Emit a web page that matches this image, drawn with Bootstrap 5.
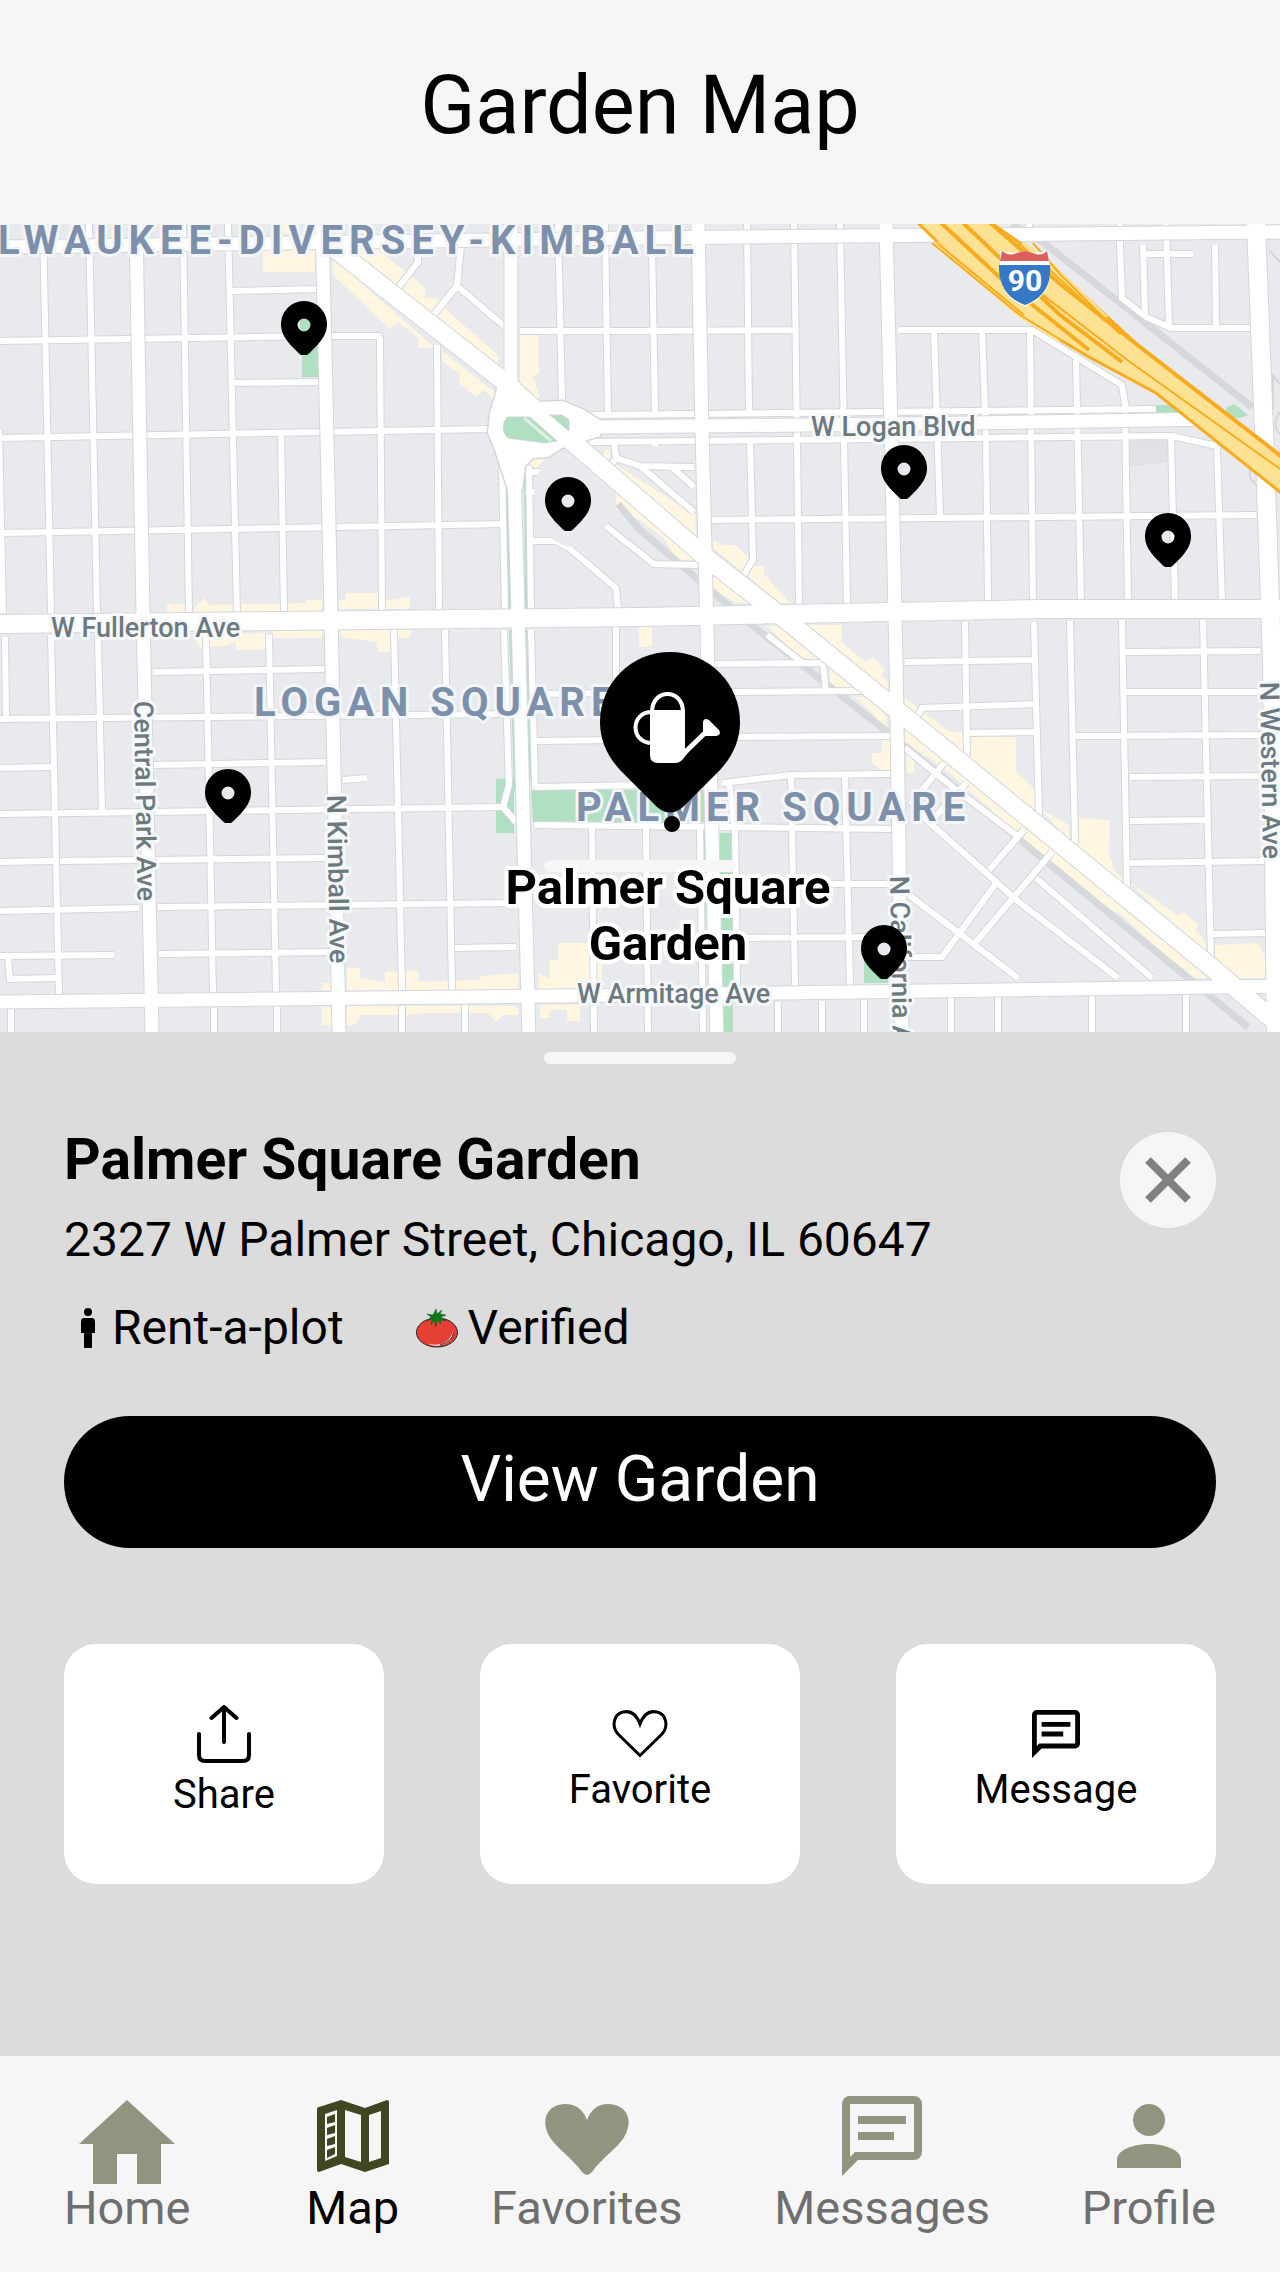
<!DOCTYPE html>
<html lang="en">
<head>
<meta charset="utf-8">
<meta name="viewport" content="width=device-width, initial-scale=1">
<title>Garden Map</title>
<link href="https://cdn.jsdelivr.net/npm/bootstrap@5.3.0/dist/css/bootstrap.min.css" rel="stylesheet">
<style>
  body { font-family: Roboto, "Liberation Sans", sans-serif; color: #000; background: #dcdcdc; }
  .app-head { background: #f6f6f6; padding: 58px 0 70px; }
  .app-title { font-size: 81px; line-height: 96px; font-weight: 400; }
  .map-art text { font-family: Roboto, "Liberation Sans", sans-serif; }
  .area-name { font-size: 40px; font-weight: 700; letter-spacing: 6px; fill: #7d90ab; stroke: #f3f5f8; stroke-width: 6px; paint-order: stroke; stroke-linejoin: round; }
  .road-name { font-size: 27px; font-weight: 500; fill: #6c7a80; stroke: #f6f8f9; stroke-width: 6px; paint-order: stroke; stroke-linejoin: round; }
  .spot-name { font-size: 49px; font-weight: 700; fill: #000; stroke: #fff; stroke-width: 8px; paint-order: stroke; stroke-linejoin: round; text-anchor: middle; }
  .pin { position: absolute; transform: translateX(-50%); line-height: 0; }
  .pin-a { left: 23.75%; top: 9.53%; }
  .pin-b { left: 44.38%; top: 31.31%; }
  .pin-c { left: 70.63%; top: 27.35%; }
  .pin-d { left: 91.25%; top: 35.77%; }
  .pin-e { left: 17.81%; top: 67.45%; }
  .pin-f { left: 69.06%; top: 86.76%; }
  .pin-main { left: 52.34%; top: 52.97%; }
  .sheet { padding: 20px 64px 172px; }
  .grip { width: 192px; height: 12px; background: #f6f6f6; margin-bottom: 64px; }
  .spot-title { font-size: 57px; line-height: 64px; font-weight: 700; }
  .spot-text { font-size: 48px; line-height: 56px; }
  .close-btn { width: 96px; height: 96px; background: #f6f6f6; line-height: 0; margin-top: 4px; }
  .address { margin-top: 20px; }
  .facts { margin-top: 32px; padding-left: 16px; gap: 72px; }
  .view-btn { margin-top: 60px; height: 132px; font-size: 64px; line-height: 72px; background: #000; color: #fff; }
  .tiles { margin-top: 96px; gap: 96px; }
  .tile { flex: 1 1 0; height: 240px; border-radius: 32px; background: #fff; color: #000; font-size: 40px; line-height: 48px; }
  .tile svg { margin-bottom: 8px; }
  .tab-bar { background: #f6f6f6; padding: 40px 64px 36px; }
  .tab-bar a { font-size: 47px; line-height: 56px; color: #6f6f6f; }
  .tab-bar a.active { color: #000; }
  .tab-bar svg { fill: #90957f; overflow: visible; }
</style>
</head>
<body>
<header class="app-head text-center">
  <h1 class="app-title m-0">Garden Map</h1>
</header>

<main>
<section class="position-relative overflow-hidden" aria-label="Map of gardens">
<svg class="map-art d-block w-100 h-auto" viewBox="0 224 1280 808" role="img" aria-label="Street map of Logan Square">
  <defs>
    <g id="lanes">
      <path d="M-1 430L3 613M43 224L51 613M89 224L97 613M183 224L189 613M228 224L237 613M281 433L284 613M380 336L382 611M437 345L439 609M502 466L505 609M529 466L531 609M558 224L562 400M605 224L608 418"/>
      <path d="M0 341L320 336H380M0 438L490 429M0 533L505 524M231 291L318 289M233 383L318 382"/>
      <path d="M418 224V262L398 288M462 236L457 286L432 317M457 286L504 326"/>
      <path d="M520 331L640 331L795 330M652 244L655 412M747 224L749 412M794 224L797 438L799 604M840 224L844 438L847 604M750 438L753 560L743 576M655 440V446"/>
      <path d="M934 330L940 517M982 330L986 438L988 602M1030 330L1033 602M1076 360L1081 602M1125 410L1128 602M1171 436L1175 602M1217 447L1222 602"/>
      <path d="M898 330H1032L1122 385L1126 410M590 415L1156 409M590 442L1172 436L1217 446M711 520L1256 515"/>
      <path d="M1120 224V245L1122 298L1146 317L1171 328H1250M1143 245L1145 315M1166 224L1169 326M1215 245L1216 328M1143 254H1193M1029 224V232"/>
      <path d="M526 472H545M526 492H545M530 541H556L569 548L616 588L618 609M588 512L640 553L654 564L698 565M614 442L616 458L640 466L694 467M616 458L612 464M640 466L694 512M672 467L694 487"/>
      <path d="M5 637L6 719M51 635L59 995M98 637L102 812M206 637L213 993M269 635L276 993M394 630L402 990M445 630L452 990M504 630L509 785L503 807L516 822M531 630L535 787M592 825L594 1032M616 627V693"/>
      <path d="M153 672L324 669M0 719L510 714M0 768L53 767M154 765L326 762M343 780L367 778M0 814L502 807M0 862L53 861M60 861L326 858M0 911L139 908M158 907L516 903M0 956L114 955M159 954L335 952M455 948L516 947M8 957L10 979L57 978M531 694L700 692M537 741L700 739M535 787L700 784M535 825L891 829"/>
      <path d="M646 826L648 1032M700 826L703 1032M729 783L735 829L737 985M791 776L795 985M845 776L850 985M715 664L823 663L826 692M715 692L862 691M715 737L890 736M722 783L791 775L890 774M735 884H890M735 938L890 937"/>
      <path d="M905 662L1036 660M917 717L922 708L1036 704M968 733L1038 732M965 622L967 757M1034 622L1039 817M1070 621L1075 843M1122 620L1127 887M1203 620L1211 962M1124 652L1260 651M1124 692H1262M1075 736L1262 735M1130 777L1262 776M1130 821L1207 820M1130 863L1266 861M1213 934L1267 933"/>
      <path d="M767 635L803 663M905 748L955 789L1020 838M944 763L912 803L930 823L1020 903L1118 978M966 783L934 818M1024 830L989 870M1052 852L975 943M997 882L942 957H907M909 895L1018 978M1036 878L1152 978"/>
      <path d="M11 1008V1032M214 1008V1032M277 1006V1032M402 1006V1032M465 1005V1032M778 1002V1032M822 1001V1032M864 1000V1032M951 998V1032M998 997V1032M1092 996V1032M1186 995V1032"/>
    </g>
    <g id="avenues">
      <path d="M0 247L640 238L1280 232M0 1002L640 995L1290 986"/>
      <path d="M136 224L143 613L152 1032M322 224L331 613L339 1032M511 224V400M514 470L518 613L529 1040M698 224L702 430L707 630L717 1040M886 224L891 430L896 660L902 1040"/>
      <path d="M600 427L900 424L1215 419"/>
    </g>
    <g id="main-roads">
      <path d="M0 624L640 617L1040 609L1290 609M1256 224L1264 430L1272 660L1276 1040M316 234L502 380L547 420L709 560L791 624L893 707L1211 967L1290 1034"/>
    </g>
    <path id="circle-road" d="M496 393L490 413L488 433L495 450L508 490H522L525 466L533 458L548 457L562 448L600 436V420L584 410L563 401L533 402L520 390L514 372L500 372Z"/>
    <path id="pin-shape" fill-rule="evenodd" d="M23 0a23 23 0 0 1 23 23.500c0 9-5 15-10 21l-8 8c-3 3-7 3-10 0l-8-8c-5-6-10-12-10-21a23 23 0 0 1 23-23.500zM23 17.500a6.500 6.500 0 1 0 0 13a6.500 6.500 0 1 0 0-13z"/>
  </defs>
  <rect y="224" width="1280" height="808" fill="#e8eaed"/>
  <path fill="#e1e2e5" d="M1129 440H1169V462L1129 467Z"/>
  <!-- commercial blocks -->
  <path fill="#fef6e0" d="M272 224H294V234H272ZM263 250H315V272H263ZM333 258L435 348H418V337L398 322L390 329L333 275ZM350 248H376L426 288L424 298H437L453 316L498 355V370ZM441 350L496 393V402L484 390L476 397L459 383L461 375L443 362ZM520 335H539V373L533 377L540 397L533 400L520 390Z
    M167 604H186V613H167ZM194 608L204 598L210 605L306 603V600H322V613H194ZM346 593H378V609H339V600H346ZM386 600L410 597V609H386ZM193 636L265 633V650H237L235 642L225 646L200 648ZM273 631H322V638H273ZM341 630H410V638H390V652H378L376 642L341 637ZM639 627H652V647H639Z
    M347 968H360V978L385 982V972L418 970V982L480 980V976L518 973V990H347ZM539 972L549 980V960H558V943H602V990H539ZM322 983H333V990H322ZM322 1007H333V1025H322ZM347 1006H518V1015H504L496 1022L488 1013H424L408 1015H361L355 1025H347ZM540 1005H580V1021H567V1010H550V1018H540Z
    M531 459H545L537 468H531ZM605 450H610V460H601ZM612 462L640 480L695 515L697 545L640 490ZM616 490L697 553V560H677L665 540L640 520L616 510ZM713 540L722 545H736L748 557L750 566H764V574L790 603H780L713 548ZM713 570L756 603H738L713 592Z
    M807 625H842V643L866 662L873 657L885 670L881 675L888 682V694ZM767 626H783L860 689H830V667H818L795 653ZM855 697H868L887 717V730L872 713ZM905 698L920 710L950 732H962L964 760L905 712ZM971 737H1016V772L1036 790V817L971 765ZM1042 810L1069 825V842ZM1079 818L1110 820L1109 853L1115 872L1124 880V890L1079 855ZM1130 882L1177 915L1183 912L1199 925L1195 930L1206 942V960ZM1215 945L1258 943L1266 957V978H1234L1215 963ZM905 728L1208 978H1195L1163 953L1118 912H1110L1048 865L1020 835L942 767L905 742ZM882 740H890V770H882L872 763V753H882ZM907 753H914V773H907Z"/>
  <!-- parks -->
  <path fill="#b1dfc1" d="M300 316H318V377H302V340H300ZM496 779L514 778V833H496ZM531 790H705V822H533ZM720 833H733V1032H720ZM864 957H888V983H864ZM1156 405H1179V413H1156ZM1226 408L1234 404L1248 415L1240 418H1226Z"/>
  <path fill="#bcdccb" d="M505 476H511L516 613H507ZM524 480H527L530 613H525ZM509 630H513L520 790H514ZM526 630H530L533 780H529ZM703 827H706V1032H703Z"/>
  <!-- railways -->
  <path fill="none" stroke="#d5d9db" stroke-width="7" d="M1012 224L1044 243L1252 407M618 504L640 530L754 627L885 730L1020 840L1248 1027"/>
  <use href="#lanes" fill="none" stroke="#d3d7dc" stroke-width="8"/>
  <use href="#lanes" fill="none" stroke="#fff" stroke-width="6"/>
  <ellipse cx="574" cy="496" rx="40" ry="51" fill="#e8eaed"/>
  <use href="#avenues" fill="none" stroke="#d3d7dc" stroke-width="15"/>
  <use href="#main-roads" fill="none" stroke="#d3d7dc" stroke-width="20"/>
  <use href="#circle-road" fill="none" stroke="#d3d7dc" stroke-width="3"/>
  <use href="#avenues" fill="none" stroke="#fff" stroke-width="13"/>
  <use href="#main-roads" fill="none" stroke="#fff" stroke-width="18"/>
  <use href="#circle-road" fill="#fff"/>
  <path fill="#b1dfc1" stroke="#cfd6d6" d="M507 417H530L557 441L545 443L508 438C502 432 502 424 507 417ZM550 415H562L569 420V431Z"/>
  <path stroke="#e3ece8" stroke-width="3" d="M524 418L551 441"/>
  <path fill="none" stroke="#d3d7dc" stroke-width="2" d="M1280 384L1273 376V410M1280 412C1274 420 1274 428 1280 434M1250 468V478L1257 486M1269 250L1280 262"/>
  <!-- expressway -->
  <path fill="#fde293" stroke="#f9ab1f" stroke-width="3" d="M915 220L955 259L1030 322L1089 357L1156 393L1290 500V463L1140 347L1050 264L987 220Z"/>
  <path fill="none" stroke="#fde293" stroke-width="5" d="M936 243L1020 315L1060 340M1022 243L1052 266L1106 318"/>
  <path fill="none" stroke="#f9ab1f" stroke-width="2" d="M932 243L1020 315L1089 357M937 243L1024 315M1018 243L1052 272L1106 322M1033 243L1060 274L1120 334M1000 262L1130 362L1290 476"/>
  <path fill="none" stroke="#f9ab1f" stroke-width="4" d="M938 220L1010 287L1089 350M960 220L1060 315L1122 362M987 220L1060 284L1140 347L1290 463"/>
  <!-- route shield -->
  <path fill="#fff" d="M1000 251Q1014 254 1025 251Q1036 254 1048 251L1050 268C1052 290 1038 302 1025 306C1012 302 998 290 1000 268Z"/>
  <path fill="#d9605c" d="M1002 251Q1008 256 1014 254Q1020 252 1025 251Q1030 252 1036 254Q1042 256 1047 251L1049 261H1000Z"/>
  <path fill="#3578c6" d="M999 265H1050C1052 287 1041 299 1025 305C1009 299 998 287 999 265Z"/>
  <text x="1025" y="291" font-size="30" font-weight="700" fill="#fff" text-anchor="middle">90</text>
  <!-- labels -->
  <text class="area-name" x="-2" y="254">LWAUKEE-DIVERSEY-KIMBALL</text>
  <text class="area-name" x="254" y="716">LOGAN SQUARE</text>
  <text class="area-name" x="576" y="821">PALMER SQUARE</text>
  <text class="road-name" x="51" y="637">W Fullerton Ave</text>
  <text class="road-name" x="811" y="436">W Logan Blvd</text>
  <text class="road-name" x="577" y="1003">W Armitage Ave</text>
  <text class="road-name" transform="translate(134 701) rotate(89)">Central Park Ave</text>
  <text class="road-name" transform="translate(327 795) rotate(89)">N Kimball Ave</text>
  <text class="road-name" transform="translate(890 876) rotate(89)">N California Ave</text>
  <text class="road-name" transform="translate(1260 682) rotate(89)">N Western Ave</text>
  <rect x="544" y="860" width="192" height="12" rx="6" fill="#f6f6f6"/>
  <text class="spot-name" x="668" y="904">Palmer Square<tspan x="668" y="960">Garden</tspan></text>
</svg>
<button type="button" class="btn p-0 border-0 pin pin-a" aria-label="Garden on Kimball Avenue"><svg width="46" height="54"><use href="#pin-shape"/></svg></button>
<button type="button" class="btn p-0 border-0 pin pin-b" aria-label="Garden on Kedzie Boulevard"><svg width="46" height="54"><use href="#pin-shape"/></svg></button>
<button type="button" class="btn p-0 border-0 pin pin-c" aria-label="Garden on Logan Boulevard"><svg width="46" height="54"><use href="#pin-shape"/></svg></button>
<button type="button" class="btn p-0 border-0 pin pin-d" aria-label="Garden near Western Avenue"><svg width="46" height="54"><use href="#pin-shape"/></svg></button>
<button type="button" class="btn p-0 border-0 pin pin-e" aria-label="Garden near Central Park Avenue"><svg width="46" height="54"><use href="#pin-shape"/></svg></button>
<button type="button" class="btn p-0 border-0 pin pin-f" aria-label="Garden on Armitage Avenue"><svg width="46" height="54"><use href="#pin-shape"/></svg></button>
<button type="button" class="btn p-0 border-0 pin pin-main" aria-label="Palmer Square Garden">
  <svg width="140" height="180" viewBox="0 0 140 180">
    <path d="M70 0a70 70 0 0 1 70 70c0 19-8 35-20 48l-37 37q-13 11-26 0l-37-37c-12-13-20-29-20-48a70 70 0 0 1 70-70z"/>
    <circle cx="72" cy="172" r="8"/>
    <g fill="none" stroke="#fff" stroke-width="4"><path d="M52 60C52 36 83 36 83 60M52 60C30 60 30 91 52 91"/><path stroke-width="5" d="M78 107L107 79"/></g>
    <path fill="#fff" d="M50 58H85V98L90 98L83 107Q80 111 75 111H58Q50 111 50 103ZM103 70Q104 65 109 68L119 78Q122 83 116 84H103Z"/>
  </svg>
</button>
</section>

<section class="sheet">
  <div class="grip rounded-pill mx-auto"></div>
  <div class="d-flex justify-content-between align-items-start">
    <div>
      <h2 class="spot-title m-0">Palmer Square Garden</h2>
      <p class="spot-text address mb-0">2327 W Palmer Street, Chicago, IL 60647</p>
    </div>
    <button type="button" class="btn close-btn rounded-circle border-0 p-0 flex-shrink-0" aria-label="Close">
      <svg width="46" height="46" viewBox="0 0 46 46"><path d="M3 3L43 43M43 3L3 43" stroke="#808080" stroke-width="8"/></svg>
    </button>
  </div>
  <ul class="facts spot-text list-unstyled d-flex flex-wrap mb-0">
    <li class="d-flex align-items-center gap-3">
      <svg width="16" height="40" viewBox="0 0 16 40"><circle cx="8" cy="4" r="4"/><path d="M4 10H12Q15 10 15 14V25H12V40H4V25H1V14Q1 10 4 10Z"/></svg>
      Rent-a-plot
    </li>
    <li class="d-flex align-items-center gap-2">
      <svg width="44" height="40" viewBox="0 0 44 40"><ellipse cx="21" cy="24.500" rx="20.500" ry="14.500" fill="#e64035" stroke="#222"/><path d="M12 36Q31 40 37 24Q36 34 26 37Q18 39 12 36Z" fill="#fff"/><path d="M24 37Q35 34 38 25" fill="none" stroke="#333"/><path fill="#107a10" stroke="#153" stroke-width=".5" d="M20 1L21 6L26 2L24 6L30 7L25 9L30 13L24 12L25 16L21 12L20 19L18 12L15 17L16 11L11 13L15 9L11 6L17 7Z"/></svg>
      Verified
    </li>
  </ul>
  <button type="button" class="btn view-btn rounded-pill border-0 w-100 px-0 pt-0 pb-1">View Garden</button>
  <div class="tiles d-flex">
    <button type="button" class="btn tile border-0 px-0 pt-0 pb-1 d-flex flex-column align-items-center justify-content-center">
      <svg width="54" height="58" viewBox="0 0 54 58" fill="none" stroke="#000" stroke-width="4" stroke-linecap="round" stroke-linejoin="round"><path d="M27 37V2M14.500 13L27 2L39.500 13M2 29V50Q2 56 8 56H46Q52 56 52 50V29"/></svg>
      Share
    </button>
    <button type="button" class="btn tile border-0 px-0 pt-0 pb-1 d-flex flex-column align-items-center justify-content-center">
      <svg width="56" height="48" viewBox="0 0 56 48" fill="none" stroke="#000" stroke-width="3"><path d="M28 45.500L6 24C-1 16 2 4 11 2C20 0 25 6 28 14C31 6 36 0 45 2C54 4 57 16 50 24Z"/></svg>
      Favorite
    </button>
    <button type="button" class="btn tile border-0 px-0 pt-0 pb-1 d-flex flex-column align-items-center justify-content-center">
      <svg width="48" height="48" viewBox="2 2 20 20"><path fill-rule="evenodd" d="M4 2H20A2 2 0 0 1 22 4V16A2 2 0 0 1 20 18H6L2 22V4A2 2 0 0 1 4 2ZM4 17L5 16H20V4H4ZM6 7H18V9H6ZM6 11H15V13H6Z"/></svg>
      Message
    </button>
  </div>
</section>
</main>

<nav class="tab-bar" aria-label="Main">
  <div class="d-flex justify-content-between text-center">
    <a href="#home" class="text-decoration-none"><svg class="d-block mx-auto" width="96" height="84"><path d="M48 4L96 48H82V88H58V58H38V88H14V48H0Z"/></svg>Home</a>
    <a href="#map" class="active text-decoration-none ms-4" aria-current="page"><svg class="d-block mx-auto" width="72" height="84"><path fill="#3f4722" fill-rule="evenodd" d="M2 11L24 4L48 12L70 4Q72 4 72 6V68L48 76L24 68L2 76Q0 76 0 74V13Q0 11 2 11ZM8 18V65L20 60V14ZM28 14V61L44 66V19ZM52 19V66L64 62V15Z"/><path fill="#3f4722" d="M10 21L18 18V26L10 28ZM10 32L18 29V37L10 39ZM10 43L18 40V48L10 50ZM10 54L18 51V58L10 62Z"/></svg>Map</a>
    <a href="#favorites" class="text-decoration-none"><svg class="d-block mx-auto" width="84" height="84"><path d="M42 79Q40 79 37 76C28 63 14 54 6 43C-7 23 4 8 20 8Q36 8 42 24Q48 8 63 8C80 8 91 23 78 43C70 54 56 63 47 76Q44 79 42 79Z"/></svg>Favorites</a>
    <a href="#messages" class="text-decoration-none"><svg class="d-block mx-auto" width="80" height="84"><path fill-rule="evenodd" d="M8 0H72A8 8 0 0 1 80 8V56A8 8 0 0 1 72 64H16L0 80V8A8 8 0 0 1 8 0ZM8 61L13 56H72V8H8ZM16 20H64V28H16ZM16 36H52V44H16Z"/></svg>Messages</a>
    <a href="#profile" class="text-decoration-none"><svg class="d-block mx-auto" width="64" height="84"><circle cx="32" cy="24" r="16"/><path d="M0 72V64C0 53 18 48 32 48C46 48 64 53 64 64V72Z"/></svg>Profile</a>
  </div>
</nav>
<script src="https://cdn.jsdelivr.net/npm/bootstrap@5.3.0/dist/js/bootstrap.bundle.min.js"></script>
</body>
</html>
